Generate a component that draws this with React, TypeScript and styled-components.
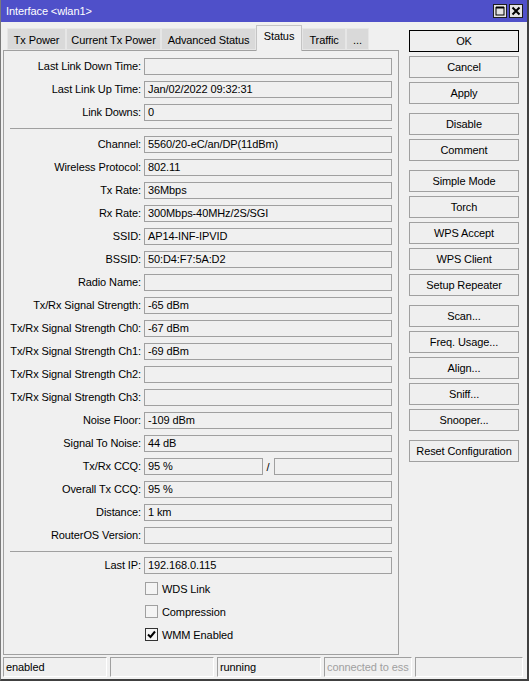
import styled, { createGlobalStyle } from 'styled-components';

type Row =
  | { kind: 'field'; label: string; value: string }
  | { kind: 'sep'; after: number }
  | { kind: 'ccq'; label: string; value: string; value2: string }
  | { kind: 'check'; label: string; checked: boolean };

const rows: Row[] = [
  { kind: 'field', label: 'Last Link Down Time:', value: '' },
  { kind: 'field', label: 'Last Link Up Time:', value: 'Jan/02/2022 09:32:31' },
  { kind: 'field', label: 'Link Downs:', value: '0' },
  { kind: 'sep', after: 1 },
  { kind: 'field', label: 'Channel:', value: '5560/20-eC/an/DP(11dBm)' },
  { kind: 'field', label: 'Wireless Protocol:', value: '802.11' },
  { kind: 'field', label: 'Tx Rate:', value: '36Mbps' },
  { kind: 'field', label: 'Rx Rate:', value: '300Mbps-40MHz/2S/SGI' },
  { kind: 'field', label: 'SSID:', value: 'AP14-INF-IPVID' },
  { kind: 'field', label: 'BSSID:', value: '50:D4:F7:5A:D2' },
  { kind: 'field', label: 'Radio Name:', value: '' },
  { kind: 'field', label: 'Tx/Rx Signal Strength:', value: '-65 dBm' },
  { kind: 'field', label: 'Tx/Rx Signal Strength Ch0:', value: '-67 dBm' },
  { kind: 'field', label: 'Tx/Rx Signal Strength Ch1:', value: '-69 dBm' },
  { kind: 'field', label: 'Tx/Rx Signal Strength Ch2:', value: '' },
  { kind: 'field', label: 'Tx/Rx Signal Strength Ch3:', value: '' },
  { kind: 'field', label: 'Noise Floor:', value: '-109 dBm' },
  { kind: 'field', label: 'Signal To Noise:', value: '44 dB' },
  { kind: 'ccq', label: 'Tx/Rx CCQ:', value: '95 %', value2: '' },
  { kind: 'field', label: 'Overall Tx CCQ:', value: '95 %' },
  { kind: 'field', label: 'Distance:', value: '1 km' },
  { kind: 'field', label: 'RouterOS Version:', value: '' },
  { kind: 'sep', after: -1 },
  { kind: 'field', label: 'Last IP:', value: '192.168.0.115' },
  { kind: 'check', label: 'WDS Link', checked: false },
  { kind: 'check', label: 'Compression', checked: false },
  { kind: 'check', label: 'WMM Enabled', checked: true },
];

// widths are fixed by the original dialog
const tabs = [
  { name: 'Tx Power', w: 59 },
  { name: 'Current Tx Power', w: 95 },
  { name: 'Advanced Status', w: 95 },
  { name: 'Status', w: 46 },
  { name: 'Traffic', w: 44 },
  { name: '...', w: 23 },
];

const buttonGroups = [
  ['OK', 'Cancel', 'Apply'],
  ['Disable', 'Comment'],
  ['Simple Mode', 'Torch', 'WPS Accept', 'WPS Client', 'Setup Repeater'],
  ['Scan...', 'Freq. Usage...', 'Align...', 'Sniff...', 'Snooper...'],
  ['Reset Configuration'],
];

const statusCells = [
  { text: 'enabled', muted: false },
  { text: '', muted: false },
  { text: 'running', muted: false },
  { text: 'connected to ess', muted: true },
  { text: '', muted: false },
];

export default function App() {
  return (
    <>
      <GlobalStyle />
      <Window>
        <TitleBar>
          <span>Interface &lt;wlan1&gt;</span>
          <TitleButtons>
            <TitleButton>
              <svg width="10" height="10" viewBox="0 0 10 10">
                <rect x="1" y="1.5" width="8" height="7.5" fill="none" stroke="#000" strokeWidth="1" />
                <line x1="1" y1="1.5" x2="9" y2="1.5" stroke="#000" strokeWidth="2" />
              </svg>
            </TitleButton>
            <TitleButton>
              <svg width="10" height="10" viewBox="0 0 10 10">
                <path d="M1.5 1.5 L8.5 8.5 M8.5 1.5 L1.5 8.5" stroke="#000" strokeWidth="2" />
              </svg>
            </TitleButton>
          </TitleButtons>
        </TitleBar>

        <Body>
          <LeftCol>
            <TabStrip>
              {tabs.map((t) => (
                <Tab key={t.name} $w={t.w} $active={t.name === 'Status'}>
                  {t.name}
                </Tab>
              ))}
            </TabStrip>
            <Panel>
              <Form>
                {rows.map((r, i) => {
                  if (r.kind === 'sep') return <Separator key={i} $after={r.after} />;
                  if (r.kind === 'check')
                    return (
                      <CheckRow key={i}>
                        <Box $checked={r.checked}>
                          {r.checked && (
                            <svg width="11" height="11" viewBox="0 0 11 11">
                              <polyline points="2,5.5 4.5,8 9,2.5" fill="none" stroke="#000" strokeWidth="2" />
                            </svg>
                          )}
                        </Box>
                        {r.label}
                      </CheckRow>
                    );
                  if (r.kind === 'ccq')
                    return [
                      <Label key={`${i}l`}>{r.label}</Label>,
                      <Split key={`${i}f`}>
                        <Field>{r.value}</Field>
                        <Slash>/</Slash>
                        <Field>{r.value2}</Field>
                      </Split>,
                    ];
                  return [
                    <Label key={`${i}l`}>{r.label}</Label>,
                    <Field key={`${i}f`}>{r.value}</Field>,
                  ];
                })}
              </Form>
            </Panel>
          </LeftCol>

          <RightCol>
            {buttonGroups.map((g, i) => (
              <ButtonGroup key={i}>
                {g.map((b) => (
                  <Button key={b} $primary={b === 'OK'}>
                    {b}
                  </Button>
                ))}
              </ButtonGroup>
            ))}
          </RightCol>
        </Body>

        <StatusBar>
          {statusCells.map((c, i) => (
            <Cell key={i} $muted={c.muted}>
              {c.text}
            </Cell>
          ))}
        </StatusBar>
      </Window>
    </>
  );
}

const GlobalStyle = createGlobalStyle`
  html, body {
    margin: 0;
    padding: 0;
    background: #f0f0f0;
  }
  body {
    font-family: "Liberation Sans", Arial, sans-serif;
    font-size: 11px;
    letter-spacing: -0.1px;
    color: #000;
  }
`;

const Window = styled.div`
  width: 529px;
  height: 681px;
  box-sizing: border-box;
  display: flex;
  flex-direction: column;
  background: #f0f0f0;
  border-left: 1px solid #7a7a7a;
  border-right: 2px solid #404040;
  border-bottom: 2px solid #404040;
`;

const TitleBar = styled.div`
  flex: none;
  height: 22px;
  display: flex;
  align-items: center;
  justify-content: space-between;
  padding: 0 4px 0 5px;
  background: #4f50c9;
  color: #fff;
`;

const TitleButtons = styled.div`
  display: flex;
  gap: 2px;
`;

const TitleButton = styled.div`
  width: 14px;
  height: 14px;
  box-sizing: border-box;
  border: 1px solid #1e1e1e;
  background: #e3e3e3;
  display: flex;
  align-items: center;
  justify-content: center;
`;

const Body = styled.div`
  flex: 1;
  min-height: 0;
  display: flex;
  padding: 3px 8px 0 2px;
`;

const LeftCol = styled.div`
  width: 396px;
  display: flex;
  flex-direction: column;
`;

const TabStrip = styled.div`
  flex: none;
  height: 25px;
  display: flex;
  align-items: flex-start;
  padding-left: 4px;
  position: relative;
  z-index: 1;
`;

const Tab = styled.div<{ $w: number; $active: boolean }>`
  box-sizing: border-box;
  width: ${(p) => p.$w}px;
  height: ${(p) => (p.$active ? '26px' : '22px')};
  margin-top: ${(p) => (p.$active ? '0' : '3px')};
  padding-top: ${(p) => (p.$active ? '4px' : '5px')};
  text-align: center;
  background: ${(p) => (p.$active ? '#f0f0f0' : '#d9d9d9')};
  border: 1px solid ${(p) => (p.$active ? '#c4c4c4' : '#e6e6e6')};
  border-bottom: ${(p) => (p.$active ? 'none' : '1px solid #e6e6e6')};
  white-space: nowrap;
`;

const Panel = styled.div`
  flex: 1;
  box-sizing: border-box;
  border: 1px solid #a0a0a0;
  background: #f0f0f0;
  padding: 7px 6px 0 0;
`;

const Form = styled.div`
  display: grid;
  grid-template-columns: 137px 1fr;
  column-gap: 3px;
  row-gap: 6px;
`;

const Label = styled.div`
  text-align: right;
  line-height: 17px;
  white-space: nowrap;
`;

const Field = styled.div`
  flex: 1;
  height: 17px;
  box-sizing: border-box;
  border: 1px solid #a0a0a0;
  padding: 0 3px;
  line-height: 15px;
  white-space: nowrap;
  overflow: hidden;
`;

const Split = styled.div`
  display: flex;
  align-items: center;
  gap: 3px;
`;

const Slash = styled.span`
  width: 5px;
  text-align: center;
`;

const Separator = styled.div<{ $after: number }>`
  grid-column: 1 / -1;
  height: 1px;
  margin: 1px 0 ${(p) => p.$after}px 6px;
  background: #a0a0a0;
`;

const CheckRow = styled.div`
  grid-column: 2;
  height: 17px;
  display: flex;
  align-items: center;
  gap: 4px;
  padding-left: 1px;
`;

const Box = styled.div<{ $checked: boolean }>`
  width: 13px;
  height: 13px;
  box-sizing: border-box;
  border: 1px solid ${(p) => (p.$checked ? '#333' : '#a0a0a0')};
  background: #f4f4f4;
  display: flex;
  align-items: center;
  justify-content: center;
`;

const RightCol = styled.div`
  width: 110px;
  margin: 5px 0 0 10px;
  display: flex;
  flex-direction: column;
  gap: 9px;
`;

const ButtonGroup = styled.div`
  display: flex;
  flex-direction: column;
  gap: 4px;
`;

const Button = styled.button<{ $primary: boolean }>`
  height: 22px;
  box-sizing: border-box;
  padding: 0;
  border: 1px solid ${(p) => (p.$primary ? '#000' : '#a0a0a0')};
  background: #efefef;
  font-family: "Liberation Sans", Arial, sans-serif;
  font-size: 11px;
  letter-spacing: -0.1px;
  color: #000;
  text-align: center;
`;

const StatusBar = styled.div`
  flex: none;
  height: 24px;
  box-sizing: border-box;
  display: grid;
  grid-template-columns: 104px 104px 104px 88px 1fr;
  gap: 3px;
  padding: 2px 4px 2px 2px;
`;

const Cell = styled.div<{ $muted: boolean }>`
  box-sizing: border-box;
  border: 1px solid;
  border-color: #a0a0a0 #fff #fff #a0a0a0;
  padding: 0 2px;
  line-height: 18px;
  white-space: nowrap;
  overflow: hidden;
  color: ${(p) => (p.$muted ? '#a0a0a0' : '#000')};
`;
